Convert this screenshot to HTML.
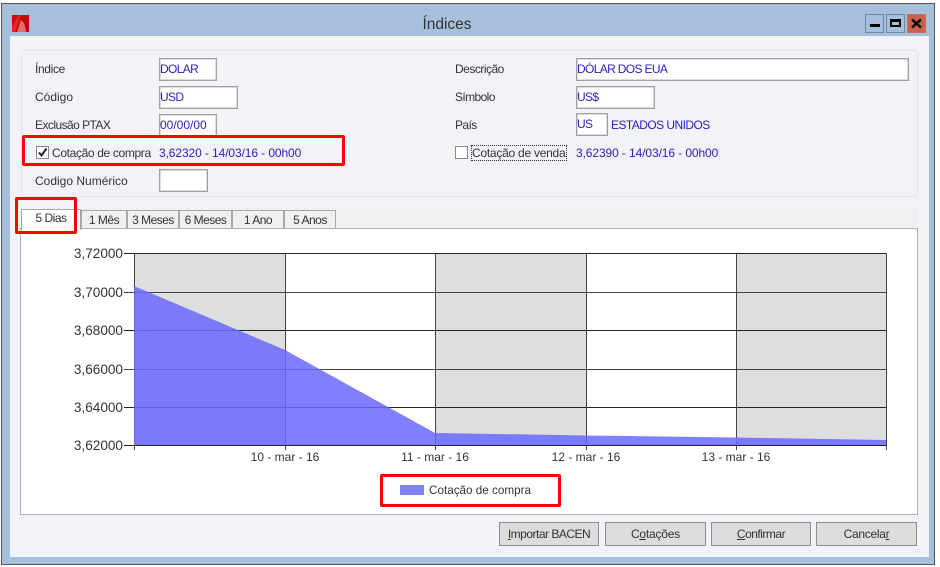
<!DOCTYPE html>
<html><head><meta charset="utf-8"><title>Índices</title>
<style>
html,body{margin:0;padding:0;background:#fff;width:940px;height:567px;overflow:hidden}
body{position:relative;font:12px "Liberation Sans",sans-serif;color:#333;filter:blur(.35px)}
div{position:absolute;box-sizing:border-box}
.t{white-space:nowrap;line-height:14px;height:14px;letter-spacing:-.35px}
.b{color:#2a1fc0;font-size:12px;letter-spacing:-.1px}
.u{color:#2a1fc0;font-size:12px;letter-spacing:-.55px}
.i{background:#fff;border:1px solid #a0a0a0;box-shadow:inset 0 0 0 .5px #b8b8b8;color:#2a1fc0;line-height:21px;padding-left:0;white-space:nowrap;height:23px;font-size:12px;letter-spacing:-.65px}
.tab{top:210px;height:19px;background:#f0f0f0;border:1px solid #a8a8a8;border-bottom:none;text-align:center;line-height:19px;color:#333;font-size:12px;letter-spacing:-.5px}
.btn{top:522px;height:24px;background:#dcdcdc;border:1px solid #8f8f8f;text-align:center;line-height:23px;color:#333;font-size:12px;letter-spacing:-.5px}
.red{border:3px solid #f00;border-radius:2px}
u{text-decoration:underline}
.wb{top:14px;width:19px;height:19px;border:1px solid #6f88a3;background:#a6c0dc}
</style></head><body>
<div style="left:1px;top:3px;width:934px;height:562px;background:#a6c0dc;border:1px solid #555"></div>
<div style="left:10px;top:36px;width:919px;height:521px;background:#f1f3f9"></div>

<svg width="17" height="17" style="position:absolute;left:12px;top:15px">
<rect width="17" height="17" fill="#c40c0c"/>
<path d="M0 12L6 1L9 0L3 17H0Z" fill="#ee2424"/>
<path d="M5 17L9 5L13 9L14 17Z" fill="#e07070"/>
<path d="M8 2L15 9L17 17H15L12 8Z" fill="#a80a0a"/>
</svg>
<div class="t" style="left:0;top:16px;width:894px;text-align:center;font-size:15.5px;line-height:18px;height:18px;color:#333;letter-spacing:0">Índices</div>

<div class="wb" style="left:865px"><div style="left:4px;top:9px;width:10px;height:3px;background:#000"></div></div>
<div class="wb" style="left:886px"><div style="left:3px;top:4px;width:11px;height:8px;border:2px solid #000;border-top-width:3px"></div></div>
<div class="wb" style="left:907px;background:#cc6048;border-color:#c4705c;">
<svg width="17" height="17" style="position:absolute;left:0;top:0"><path d="M4 4.5L13 12.5M13 4.5L4 12.5" stroke="#111" stroke-width="2.6"/></svg></div>

<div style="left:21px;top:50px;width:897px;height:147px;border:1px solid #e2e5ec;border-radius:4px;background:#f1f3f9"></div>

<div class="t" style="left:35px;top:62px">Índice</div>
<div class="i" style="left:159px;top:58px;width:58px">DOLAR</div>
<div class="t" style="left:35px;top:90px;letter-spacing:0">Código</div>
<div class="i" style="left:159px;top:86px;width:79px">USD</div>
<div class="t" style="left:35px;top:118px;letter-spacing:-.55px">Exclusão PTAX</div>
<div class="i" style="left:159px;top:114px;width:58px;letter-spacing:0">00/00/00</div>

<div style="left:36px;top:146px;width:13px;height:13px;background:#fff;border:1px solid #8a8a8a">
<svg width="11" height="11" style="position:absolute;left:0;top:0"><path d="M2 5.5L4.5 8.5L9.5 1.5" fill="none" stroke="#222" stroke-width="2"/></svg></div>
<div class="t" style="left:52px;top:146px">Cotação de compra</div>
<div class="t b" style="left:159px;top:146px">3,62320 - 14/03/16 - 00h00</div>
<div class="red" style="left:22px;top:135px;width:323px;height:31px"></div>

<div class="t" style="left:35px;top:174px;letter-spacing:0">Codigo Numérico</div>
<div class="i" style="left:159px;top:169px;width:49px">&nbsp;</div>

<div class="t" style="left:455px;top:62px;letter-spacing:-.5px">Descrição</div>
<div class="i" style="left:576px;top:58px;width:333px">DÓLAR DOS EUA</div>
<div class="t" style="left:455px;top:90px;letter-spacing:-.6px">Símbolo</div>
<div class="i" style="left:576px;top:86px;width:79px">US$</div>
<div class="t" style="left:455px;top:118px;letter-spacing:-.6px">País</div>
<div class="i" style="left:576px;top:113px;width:32px">US</div>
<div class="t u" style="left:611px;top:118px">ESTADOS UNIDOS</div>

<div style="left:455px;top:146px;width:13px;height:13px;background:#fff;border:1px solid #8a8a8a"></div>
<div class="t" style="left:471px;top:145px;border:1px dotted #333;height:16px;line-height:14px;width:96px;letter-spacing:-.25px">Cotação de venda</div>
<div class="t b" style="left:576px;top:146px">3,62390 - 14/03/16 - 00h00</div>

<div style="left:21px;top:207px;width:897px;height:22px;background:#f0f0f0"></div>
<div class="tab" style="left:81px;width:46px">1 Mês</div>
<div class="tab" style="left:127px;width:52px">3 Meses</div>
<div class="tab" style="left:179px;width:53px">6 Meses</div>
<div class="tab" style="left:232px;width:52px">1 Ano</div>
<div class="tab" style="left:284px;width:52px">5 Anos</div>

<div style="left:20px;top:228px;width:898px;height:287px;background:#fff;border:1px solid #b0b0b4"></div>
<div style="left:21px;top:209px;width:60px;height:21px;background:#fff;border:1px solid #a8a8a8;border-bottom:none;text-align:center;line-height:16px;color:#333;font-size:12px;letter-spacing:-.5px">5 Dias</div>
<div class="red" style="left:15px;top:197px;width:62px;height:37px"></div>

<svg width="940" height="567" style="position:absolute;left:0;top:0;pointer-events:none">
<rect x="134" y="253" width="151" height="192" fill="#dedede"/>
<rect x="435" y="253" width="151" height="192" fill="#dedede"/>
<rect x="736" y="253" width="150" height="192" fill="#dedede"/>
<g stroke="#222" stroke-width="1" fill="none">
<path d="M124 253.5H886M124 330.5H886M124 407.5H886M124 445.5H886"/>
<path d="M124 292.5H886M124 369.5H886" stroke="#444"/>
<path d="M134.5 253V450M285.5 253V450M435.5 253V450M586.5 253V450M736.5 253V450M886.5 253V450" stroke="#444"/>
</g>
<polygon points="134,286 285,350 435,433 586,435.5 736,437.5 886,440 886,445 134,445" fill="#6a6aff" fill-opacity=".85"/>
<g font-family="Liberation Sans, sans-serif" font-size="13.6" fill="#333" text-anchor="end">
<text x="123" y="258">3,72000</text>
<text x="123" y="297">3,70000</text>
<text x="123" y="335">3,68000</text>
<text x="123" y="374">3,66000</text>
<text x="123" y="412">3,64000</text>
<text x="123" y="450">3,62000</text>
</g>
<g font-family="Liberation Sans, sans-serif" font-size="12" fill="#333" text-anchor="middle">
<text x="285" y="461">10 - mar - 16</text>
<text x="435" y="461">11 - mar - 16</text>
<text x="586" y="461">12 - mar - 16</text>
<text x="736" y="461">13 - mar - 16</text>
</g>
<rect x="400" y="485" width="24" height="10" fill="#8080ff"/>
<text x="429" y="494" font-family="Liberation Sans, sans-serif" font-size="11.7" fill="#333">Cotação de compra</text>
</svg>
<div class="red" style="left:380px;top:474px;width:181px;height:33px"></div>

<div class="btn" style="left:499px;width:100px"><u>I</u>mportar BACEN</div>
<div class="btn" style="left:605px;width:101px;letter-spacing:-.2px">C<u>o</u>tações</div>
<div class="btn" style="left:711px;width:100px"><u>C</u>onfirmar</div>
<div class="btn" style="left:816px;width:101px;letter-spacing:-.3px">Cancela<u>r</u></div>
</body></html>
